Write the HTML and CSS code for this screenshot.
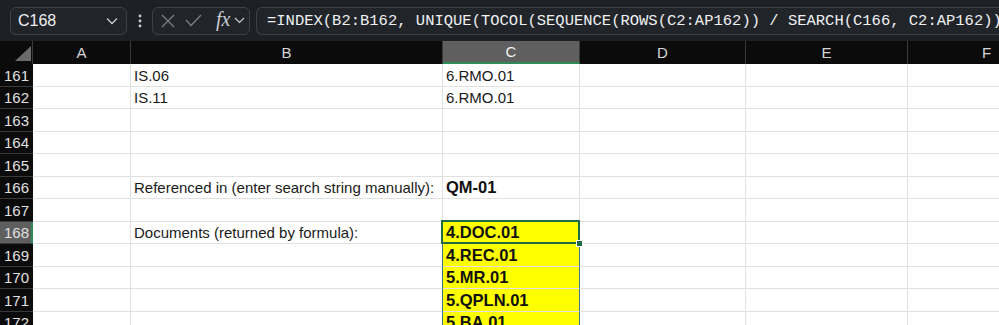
FILE: index.html
```html
<!DOCTYPE html>
<html lang="en">
<head>
    <meta charset="UTF-8">
    <title>Sheet</title>
    <link rel="stylesheet" href="styles.css">
</head>
<body>
    <div class="toolbar">
        <div class="name-box">
            <span>C168</span>
            <svg width="12" height="8" viewBox="0 0 12 8"><path d="M1 1.5 L6 6.5 L11 1.5" fill="none" stroke="#c9cdd1" stroke-width="1.3"/></svg>
        </div>
        <div class="dots">
            <svg width="4" height="14" viewBox="0 0 4 14"><circle cx="2" cy="2" r="1.4" fill="#c9cdd1"/><circle cx="2" cy="7" r="1.4" fill="#c9cdd1"/><circle cx="2" cy="12" r="1.4" fill="#c9cdd1"/></svg>
        </div>
        <div class="fx-box">
            <svg width="14" height="14" viewBox="0 0 14 14"><path d="M1 1 L13 13 M13 1 L1 13" stroke="#7d8287" stroke-width="1.2"/></svg>
            <svg width="17" height="13" viewBox="0 0 17 13"><path d="M1 6 L6 11.5 L16 1" fill="none" stroke="#7d8287" stroke-width="1.2"/></svg>
            <span class="fx">fx</span>
            <svg width="11" height="7" viewBox="0 0 11 7"><path d="M1 1 L5.5 5.5 L10 1" fill="none" stroke="#c9cdd1" stroke-width="1.2"/></svg>
        </div>
        <div class="formula">=INDEX(B2:B162, UNIQUE(TOCOL(SEQUENCE(ROWS(C2:AP162)) / SEARCH(C166, C2:AP162)), TRUE))</div>
    </div>

    <div class="sheet">
        <div class="corner"><svg width="16" height="15" viewBox="0 0 16 15"><path d="M16 0 L16 15 L0 15 Z" fill="#6b6b6b"/></svg></div>
        <div class="col-head">A</div>
        <div class="col-head">B</div>
        <div class="col-head active">C</div>
        <div class="col-head">D</div>
        <div class="col-head">E</div>
        <div class="col-head">F</div>

        <div class="row-head">161</div><div class="cell"></div><div class="cell">IS.06</div><div class="cell">6.RMO.01</div><div class="cell"></div><div class="cell"></div><div class="cell"></div>
        <div class="row-head">162</div><div class="cell"></div><div class="cell">IS.11</div><div class="cell">6.RMO.01</div><div class="cell"></div><div class="cell"></div><div class="cell"></div>
        <div class="row-head">163</div><div class="cell"></div><div class="cell"></div><div class="cell"></div><div class="cell"></div><div class="cell"></div><div class="cell"></div>
        <div class="row-head">164</div><div class="cell"></div><div class="cell"></div><div class="cell"></div><div class="cell"></div><div class="cell"></div><div class="cell"></div>
        <div class="row-head">165</div><div class="cell"></div><div class="cell"></div><div class="cell"></div><div class="cell"></div><div class="cell"></div><div class="cell"></div>
        <div class="row-head">166</div><div class="cell"></div><div class="cell">Referenced in (enter search string manually):</div><div class="cell bold">QM-01</div><div class="cell"></div><div class="cell"></div><div class="cell"></div>
        <div class="row-head">167</div><div class="cell"></div><div class="cell"></div><div class="cell"></div><div class="cell"></div><div class="cell"></div><div class="cell"></div>
        <div class="row-head active">168</div><div class="cell"></div><div class="cell">Documents (returned by formula):</div><div class="cell bold spill selected">4.DOC.01</div><div class="cell"></div><div class="cell"></div><div class="cell"></div>
        <div class="row-head">169</div><div class="cell"></div><div class="cell"></div><div class="cell bold spill">4.REC.01</div><div class="cell"></div><div class="cell"></div><div class="cell"></div>
        <div class="row-head">170</div><div class="cell"></div><div class="cell"></div><div class="cell bold spill">5.MR.01</div><div class="cell"></div><div class="cell"></div><div class="cell"></div>
        <div class="row-head">171</div><div class="cell"></div><div class="cell"></div><div class="cell bold spill">5.QPLN.01</div><div class="cell"></div><div class="cell"></div><div class="cell"></div>
        <div class="row-head">172</div><div class="cell"></div><div class="cell"></div><div class="cell bold spill">5.BA.01</div><div class="cell"></div><div class="cell"></div><div class="cell"></div>
    </div>
</body>
</html>
```

FILE: styles.css
```css
body { margin: 0; overflow: hidden; background: #ffffff; font-family: "Liberation Sans", Arial, sans-serif; }

.toolbar { height: 41px; background: #1d2126; display: flex; align-items: center; padding-left: 10px; box-sizing: border-box; }
.name-box { width: 117px; height: 28px; box-sizing: border-box; border: 1px solid #3c4248; border-radius: 6px; background: #212529; display: flex; align-items: center; justify-content: space-between; padding: 0 8px 0 7px; color: #eef0f2; font-size: 16px; }
.dots { width: 25px; display: flex; justify-content: center; }
.fx-box { width: 98px; height: 28px; box-sizing: border-box; border: 1px solid #3c4248; border-radius: 6px; background: #212529; display: flex; align-items: center; gap: 10px; padding-left: 8px; }
.fx { font-family: "Liberation Serif", serif; font-style: italic; font-size: 20px; color: #c9cdd1; margin-left: 4px; margin-top: -3px; margin-right: -6px; }
.formula { margin-left: 6px; height: 28px; flex: 1; box-sizing: border-box; border: 1px solid #3c4248; border-right: none; border-radius: 6px 0 0 6px; background: #212529; color: #eef0f2; font-family: "Liberation Mono", monospace; font-size: 15.5px; line-height: 26px; padding-left: 10px; white-space: nowrap; overflow: hidden; }

.sheet { display: grid; grid-template-columns: 33px 98px 312px 137px 166px 162px 158px; grid-template-rows: 23px 23px 22px 23px 22px 23px 22px 23px 22px 23px 22px 23px 22px; }
.corner { background: #0b0b0b; border-right: 1px solid #3a3a3a; box-sizing: border-box; display: flex; align-items: flex-end; justify-content: flex-end; padding: 0 1px 3px 0; }
.col-head { background: #0b0b0b; color: #d6d6d6; font-size: 15px; display: flex; align-items: center; justify-content: center; border-right: 1px solid #3a3a3a; box-sizing: border-box; }
.col-head.active { background: #5f5f5f; color: #f2f2f2; border-bottom: 2px solid #2e8b57; }
.row-head { background: #0b0b0b; color: #e0e0e0; font-size: 15px; display: flex; align-items: center; justify-content: flex-end; padding-right: 4px; border-bottom: 1px solid #3a3a3a; box-sizing: border-box; }
.row-head.active { background: #5f5f5f; border-right: 2px solid #2e8b57; padding-right: 2px; }
.cell { border-right: 1px solid #e1e1e1; border-bottom: 1px solid #e1e1e1; box-sizing: border-box; font-size: 15px; color: #1a1a1a; padding: 0 3px; display: flex; align-items: center; white-space: nowrap; }
.bold { font-weight: bold; font-size: 16.5px; color: #111111; }
.spill { background: #ffff00; border-right-color: #46708a; box-shadow: -1px 0 0 #46708a; }
.selected { position: relative; }
.selected::after { content: ""; position: absolute; left: -2px; top: -2px; right: -1px; bottom: -1px; border: 2px solid #1f6b45; }
.selected::before { content: ""; position: absolute; right: -4px; bottom: -4px; width: 5px; height: 5px; background: #1f6b45; border: 1px solid #ffffff; z-index: 2; }
```
